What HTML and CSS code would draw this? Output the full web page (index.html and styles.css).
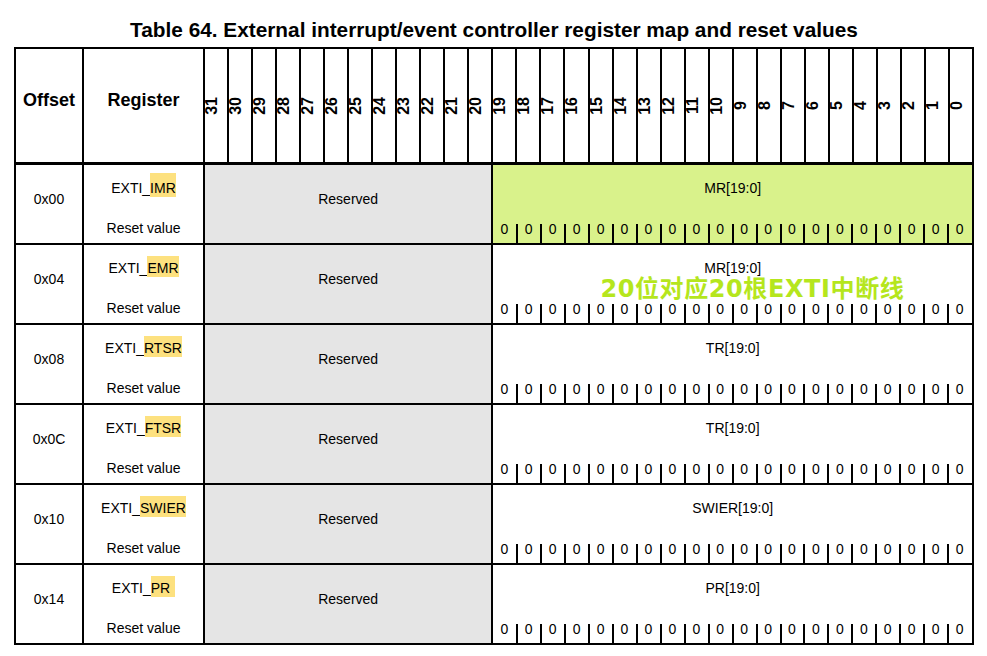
FILE: index.html
```html
<!DOCTYPE html>
<html lang="en">
<head>
<meta charset="utf-8">
<title>EXTI register map</title>
<link rel="stylesheet" href="styles.css">
</head>
<body>
<div class="page">
  <h1 class="title">Table 64. External interrupt/event controller register map and reset values</h1>
  <table class="regmap">
    <colgroup>
      <col class="c-off">
      <col class="c-reg">
      <col span="32" class="c-bit">
    </colgroup>
    <thead>
      <tr>
        <th><div class="hcell">Offset</div></th>
        <th><div class="hcell">Register</div></th>
        <th><div class="bitno"><span>31</span></div></th>
        <th><div class="bitno"><span>30</span></div></th>
        <th><div class="bitno"><span>29</span></div></th>
        <th><div class="bitno"><span>28</span></div></th>
        <th><div class="bitno"><span>27</span></div></th>
        <th><div class="bitno"><span>26</span></div></th>
        <th><div class="bitno"><span>25</span></div></th>
        <th><div class="bitno"><span>24</span></div></th>
        <th><div class="bitno"><span>23</span></div></th>
        <th><div class="bitno"><span>22</span></div></th>
        <th><div class="bitno"><span>21</span></div></th>
        <th><div class="bitno"><span>20</span></div></th>
        <th><div class="bitno"><span>19</span></div></th>
        <th><div class="bitno"><span>18</span></div></th>
        <th><div class="bitno"><span>17</span></div></th>
        <th><div class="bitno"><span>16</span></div></th>
        <th><div class="bitno"><span>15</span></div></th>
        <th><div class="bitno"><span>14</span></div></th>
        <th><div class="bitno"><span>13</span></div></th>
        <th><div class="bitno"><span>12</span></div></th>
        <th><div class="bitno"><span>11</span></div></th>
        <th><div class="bitno"><span>10</span></div></th>
        <th><div class="bitno"><span>9</span></div></th>
        <th><div class="bitno"><span>8</span></div></th>
        <th><div class="bitno"><span>7</span></div></th>
        <th><div class="bitno"><span>6</span></div></th>
        <th><div class="bitno"><span>5</span></div></th>
        <th><div class="bitno"><span>4</span></div></th>
        <th><div class="bitno"><span>3</span></div></th>
        <th><div class="bitno"><span>2</span></div></th>
        <th><div class="bitno"><span>1</span></div></th>
        <th><div class="bitno"><span>0</span></div></th>
      </tr>
    </thead>
    <tbody>
      <tr>
        <td><div class="offcell">0x00</div></td>
        <td><div class="regcell"><div class="rname">EXTI_<span class="hl hl-tall">IMR</span></div><div class="reset">Reset value</div></div></td>
        <td colspan="12" class="rsv"><div class="offcell">Reserved</div></td>
        <td colspan="20" class="field green"><div class="fieldcell"><div class="fname">MR[19:0]</div><div class="zeros"><span>0</span><span>0</span><span>0</span><span>0</span><span>0</span><span>0</span><span>0</span><span>0</span><span>0</span><span>0</span><span>0</span><span>0</span><span>0</span><span>0</span><span>0</span><span>0</span><span>0</span><span>0</span><span>0</span><span>0</span></div></div></td>
      </tr>
      <tr>
        <td><div class="offcell">0x04</div></td>
        <td><div class="regcell"><div class="rname">EXTI_<span class="hl">EMR</span></div><div class="reset">Reset value</div></div></td>
        <td colspan="12" class="rsv"><div class="offcell">Reserved</div></td>
        <td colspan="20" class="field"><div class="fieldcell"><div class="fname">MR[19:0]</div><div class="zeros"><span>0</span><span>0</span><span>0</span><span>0</span><span>0</span><span>0</span><span>0</span><span>0</span><span>0</span><span>0</span><span>0</span><span>0</span><span>0</span><span>0</span><span>0</span><span>0</span><span>0</span><span>0</span><span>0</span><span>0</span></div><div class="note">20位对应20根EXTI中断线</div></div></td>
      </tr>
      <tr>
        <td><div class="offcell">0x08</div></td>
        <td><div class="regcell"><div class="rname">EXTI_<span class="hl">RTSR</span></div><div class="reset">Reset value</div></div></td>
        <td colspan="12" class="rsv"><div class="offcell">Reserved</div></td>
        <td colspan="20" class="field"><div class="fieldcell"><div class="fname">TR[19:0]</div><div class="zeros"><span>0</span><span>0</span><span>0</span><span>0</span><span>0</span><span>0</span><span>0</span><span>0</span><span>0</span><span>0</span><span>0</span><span>0</span><span>0</span><span>0</span><span>0</span><span>0</span><span>0</span><span>0</span><span>0</span><span>0</span></div></div></td>
      </tr>
      <tr>
        <td><div class="offcell">0x0C</div></td>
        <td><div class="regcell"><div class="rname">EXTI_<span class="hl">FTSR</span></div><div class="reset">Reset value</div></div></td>
        <td colspan="12" class="rsv"><div class="offcell">Reserved</div></td>
        <td colspan="20" class="field"><div class="fieldcell"><div class="fname">TR[19:0]</div><div class="zeros"><span>0</span><span>0</span><span>0</span><span>0</span><span>0</span><span>0</span><span>0</span><span>0</span><span>0</span><span>0</span><span>0</span><span>0</span><span>0</span><span>0</span><span>0</span><span>0</span><span>0</span><span>0</span><span>0</span><span>0</span></div></div></td>
      </tr>
      <tr>
        <td><div class="offcell">0x10</div></td>
        <td><div class="regcell"><div class="rname">EXTI_<span class="hl">SWIER</span></div><div class="reset">Reset value</div></div></td>
        <td colspan="12" class="rsv"><div class="offcell">Reserved</div></td>
        <td colspan="20" class="field"><div class="fieldcell"><div class="fname">SWIER[19:0]</div><div class="zeros"><span>0</span><span>0</span><span>0</span><span>0</span><span>0</span><span>0</span><span>0</span><span>0</span><span>0</span><span>0</span><span>0</span><span>0</span><span>0</span><span>0</span><span>0</span><span>0</span><span>0</span><span>0</span><span>0</span><span>0</span></div></div></td>
      </tr>
      <tr>
        <td><div class="offcell">0x14</div></td>
        <td><div class="regcell"><div class="rname">EXTI_<span class="hl hl-pad">PR</span></div><div class="reset">Reset value</div></div></td>
        <td colspan="12" class="rsv"><div class="offcell">Reserved</div></td>
        <td colspan="20" class="field"><div class="fieldcell"><div class="fname">PR[19:0]</div><div class="zeros"><span>0</span><span>0</span><span>0</span><span>0</span><span>0</span><span>0</span><span>0</span><span>0</span><span>0</span><span>0</span><span>0</span><span>0</span><span>0</span><span>0</span><span>0</span><span>0</span><span>0</span><span>0</span><span>0</span><span>0</span></div></div></td>
      </tr>
    </tbody>
  </table>
</div>
</body>
</html>
```

FILE: styles.css
```css
* {
  box-sizing: border-box;
}

body {
  margin: 0;
  background: #ffffff;
  color: #000000;
  font-family: "Liberation Sans", Arial, sans-serif;
}

.page {
  padding: 18px 0 0 14px;
}

.title {
  width: 960px;
  margin: 0 0 5px;
  text-align: center;
  font-size: 20.8px;
  line-height: 24px;
  font-weight: 700;
}

.regmap {
  width: 960px;
  border-collapse: collapse;
  table-layout: fixed;
  font-size: 14px;
}

.c-off {
  width: 68px;
}

.c-reg {
  width: 121px;
}

.regmap th,
.regmap td {
  padding: 0;
  border: 2px solid #000000;
  vertical-align: top;
}

.regmap thead th {
  border-bottom-width: 3px;
}

.rsv {
  background: #e5e5e5;
}

.green {
  background: #d9f28b;
}

.hcell {
  height: 113px;
  padding-top: 41px;
  text-align: center;
  font-size: 18px;
  line-height: 20px;
  font-weight: 700;
}

.bitno {
  height: 113px;
  display: flex;
  align-items: center;
  justify-content: flex-start;
}

.bitno span {
  writing-mode: vertical-rl;
  transform: rotate(180deg);
  font-size: 16px;
  line-height: 18px;
  font-weight: 700;
  margin-left: -2px;
}

.offcell {
  height: 78px;
  padding-top: 26px;
  text-align: center;
  line-height: 16px;
}

.regcell {
  height: 78px;
  padding-top: 15px;
  text-align: center;
  line-height: 16px;
}

.reset {
  margin-top: 24px;
}

.hl {
  background: #fde17f;
  padding: 4px 0 1px;
}

.hl-tall {
  padding-top: 7px;
}

.hl-pad {
  padding-right: 5px;
}

.fieldcell {
  position: relative;
  height: 78px;
  padding-top: 15px;
  text-align: center;
  line-height: 16px;
}

.zeros {
  display: grid;
  grid-template-columns: repeat(20, 1fr);
  height: 19px;
  margin-top: 28px;
  line-height: 10px;
}

.zeros span {
  padding-right: 2px;
}

.zeros span + span {
  border-left: 2px solid #000000;
  margin-left: -1px;
}

.note {
  position: absolute;
  left: 107px;
  top: 36px;
  font-family: "DejaVu Sans", "Noto Sans CJK SC", sans-serif;
  font-size: 24px;
  line-height: 16px;
  font-weight: 700;
  letter-spacing: 0.6px;
  color: #b5e61d;
  white-space: nowrap;
}
```
